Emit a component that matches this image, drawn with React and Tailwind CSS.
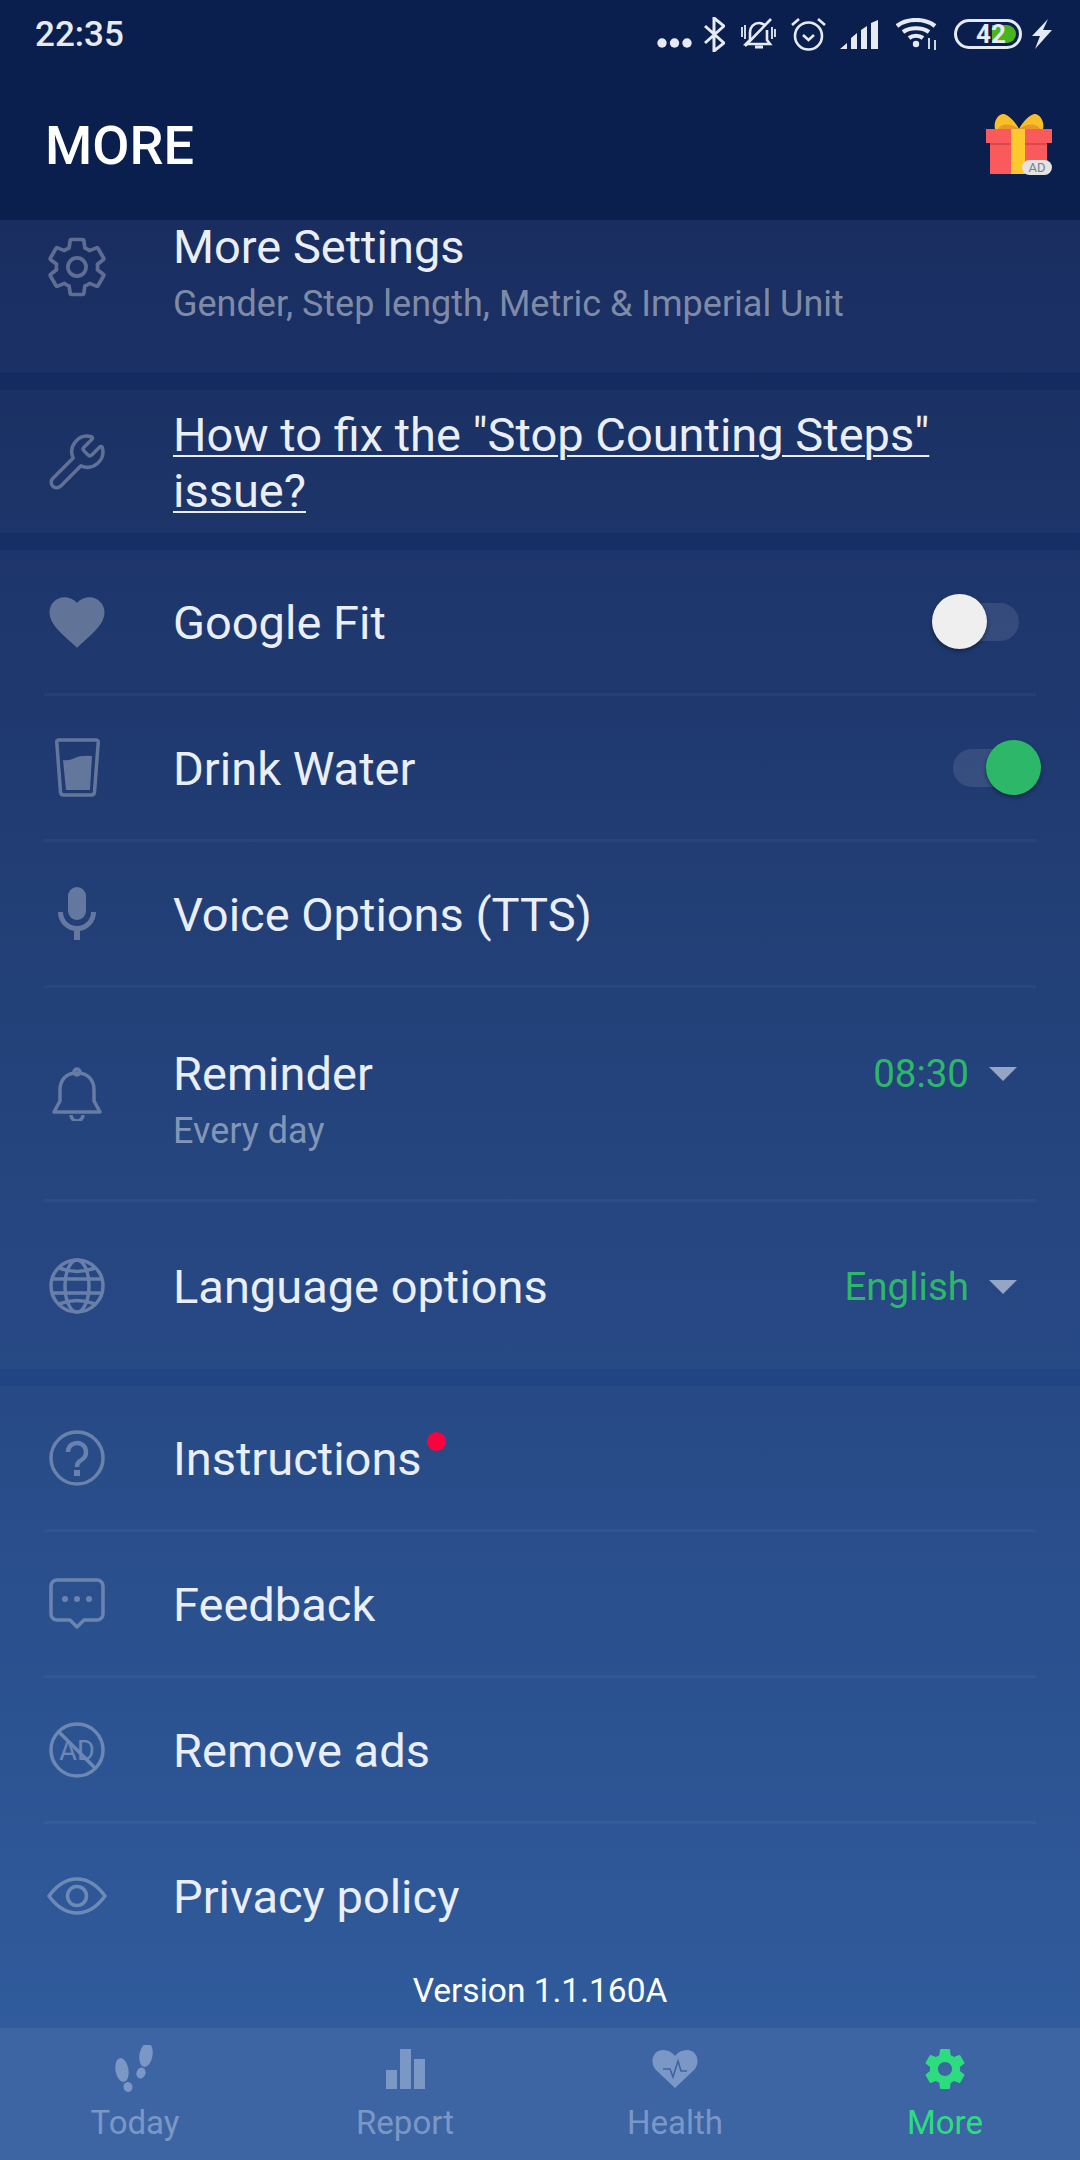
import React from 'react';
import { Wrench } from 'lucide-react';

const GEAR_OUTER = "M19.43 12.98c.04-.32.07-.64.07-.98s-.03-.66-.07-.98l2.11-1.65c.19-.15.24-.42.12-.64l-2-3.46c-.12-.22-.39-.3-.61-.22l-2.49 1c-.52-.4-1.08-.73-1.69-.98l-.38-2.65C14.46 2.18 14.25 2 14 2h-4c-.25 0-.46.18-.49.42l-.38 2.65c-.61.25-1.17.59-1.69.98l-2.49-1c-.23-.09-.49 0-.61.22l-2 3.46c-.13.22-.07.49.12.64l2.11 1.65c-.04.32-.07.65-.07.98s.03.66.07.98l-2.11 1.65c-.19.15-.24.42-.12.64l2 3.46c.12.22.39.3.61.22l2.49-1c.52.4 1.08.73 1.69.98l.38 2.65c.03.24.24.42.49.42h4c.25 0 .46-.18.49-.42l.38-2.65c.61-.25 1.17-.59 1.69-.98l2.49 1c.23.09.49 0 .61-.22l2-3.46c.12-.22.07-.49-.12-.64l-2.11-1.65z";
const GEAR_HOLE = "M12 15.5c-1.93 0-3.5-1.57-3.5-3.5s1.57-3.5 3.5-3.5 3.5 1.57 3.5 3.5-1.57 3.5-3.5 3.5z";
const HEART = "M12 21.35l-1.45-1.32C5.4 15.36 2 12.28 2 8.5 2 5.42 4.42 3 7.5 3c1.74 0 3.41.81 4.5 2.09C13.09 3.81 14.76 3 16.5 3 19.58 3 22 5.42 22 8.5c0 3.78-3.4 6.86-8.55 11.54L12 21.35z";

// list icons, all drawn solid white and faded through opacity
const iconClass = "text-white opacity-30";

const GearIcon = () => (
  <svg width="66" height="66" viewBox="0 0 24 24" fill="none" stroke="currentColor" strokeWidth="1.35" strokeLinejoin="round" className={iconClass}>
    <path d={GEAR_OUTER} />
    <circle cx="12" cy="12" r="3.3" />
  </svg>
);
const WrenchIcon = () => <Wrench size={62} strokeWidth={1.35} className={`${iconClass} -scale-x-100 rotate-90`} />;
const HeartIcon = () => (
  <svg width="66" height="66" viewBox="0 0 24 24" fill="currentColor" className={iconClass}><path d={HEART} /></svg>
);
const GlassIcon = () => (
  <svg width="45" height="59" viewBox="0 0 45 59" fill="none" className={iconClass}>
    <path d="M4 2H41Q43.5 2 43.2 4.5L39.5 54Q39.2 57 36.5 57H8.5Q5.8 57 5.5 54L1.8 4.5Q1.5 2 4 2Z" stroke="currentColor" strokeWidth="3.5" />
    <path d="M8 22Q14 23 20 20T37 18L35 52H11Z" fill="currentColor" />
  </svg>
);
const MicIcon = () => (
  <svg width="38" height="53" viewBox="0 0 38 53" fill="none" className={iconClass}>
    <rect x="10" y="0" width="18" height="33" rx="9" fill="currentColor" />
    <path d="M2.5 25a16.5 16.5 0 0 0 33 0" stroke="currentColor" strokeWidth="5" />
    <rect x="16" y="41" width="6" height="12" fill="currentColor" />
  </svg>
);
const BellIcon = () => (
  <svg width="50" height="54" viewBox="0 0 50 54" fill="none" stroke="currentColor" strokeWidth="3.5" strokeLinejoin="round" className={iconClass}>
    <path d="M25 6C14 6 8 13 8 23V34L2 45H48L42 34V23C42 13 36 6 25 6Z" />
    <circle cx="25" cy="5" r="3" />
    <path d="M19 48a6 6 0 0 0 12 0" />
  </svg>
);
const GlobeIcon = () => (
  <svg width="56" height="56" viewBox="0 0 56 56" fill="none" stroke="currentColor" strokeWidth="3.5" className={iconClass}>
    <circle cx="28" cy="28" r="26" />
    <ellipse cx="28" cy="28" rx="12" ry="26" />
    <path d="M3 21H53M3 35H53M10 10Q28 17 46 10M10 46Q28 39 46 46" />
  </svg>
);
const QuestionIcon = () => (
  <svg width="56" height="56" viewBox="0 0 56 56" fill="none" stroke="currentColor" className={iconClass}>
    <circle cx="28" cy="28" r="26" strokeWidth="3.5" />
    <path d="M19 22a9 9 0 1 1 14 7.5c-3.5 2.3-5 3.5-5 7.5" strokeWidth="4.5" />
    <rect x="25" y="40" width="6" height="6" fill="currentColor" stroke="none" />
  </svg>
);
const ChatIcon = () => (
  <svg width="56" height="52" viewBox="0 0 56 52" fill="none" className={iconClass}>
    <path d="M8 2H48A6 6 0 0 1 54 8V36A6 6 0 0 1 48 42H35L28 49L21 42H8A6 6 0 0 1 2 36V8A6 6 0 0 1 8 2Z" stroke="currentColor" strokeWidth="3.5" strokeLinejoin="round" />
    <circle cx="16" cy="21" r="3" fill="currentColor" />
    <circle cx="28" cy="21" r="3" fill="currentColor" />
    <circle cx="40" cy="21" r="3" fill="currentColor" />
  </svg>
);
const NoAdIcon = () => (
  <svg width="56" height="56" viewBox="0 0 56 56" fill="none" className={iconClass}>
    <circle cx="28" cy="28" r="26" stroke="currentColor" strokeWidth="3.5" />
    <text x="28" y="38" textAnchor="middle" fontFamily="Roboto" fontSize="27" fill="currentColor">AD</text>
    <path d="M10 10L46 46" stroke="currentColor" strokeWidth="3.5" />
  </svg>
);
const EyeIcon = () => (
  <svg width="60" height="38" viewBox="0 0 60 38" fill="none" stroke="currentColor" strokeWidth="3.5" strokeLinejoin="round" className={iconClass}>
    <path d="M2 19C10 8 19 2 30 2S50 8 58 19C50 30 41 36 30 36S10 30 2 19Z" />
    <circle cx="30" cy="19" r="9.5" />
  </svg>
);

const Toggle = ({ on }) => (
  <div className="relative w-[66px] h-[38px] rounded-full bg-white/10">
    <div className={`absolute top-[-9px] w-[55px] h-[55px] rounded-full shadow-[0_2px_4px_rgba(0,0,0,0.4)] ${on ? 'right-[-22px] bg-[#2cb868]' : 'left-[-21px] bg-[#efefef]'}`} />
  </div>
);

const Caret = () => (
  <div className="w-0 h-0 ml-[20px] border-x-[14px] border-x-transparent border-t-[14px] border-t-[#94a5c6]" />
);

const Row = ({ icon, title, sub, right, last, height = 'h-[146px]', dot }) => (
  <div className={`mx-[44px] flex items-center ${height} ${last ? '' : 'border-b-[3px] border-white/[0.04]'}`}>
    <div className="w-[66px] mr-[63px] flex items-center justify-center shrink-0">{icon}</div>
    <div className={`flex-1 ${sub ? 'mt-[18px]' : 'mt-[2px]'}`}>
      <div className="relative w-fit text-[47px] leading-[56px] text-[#e9eef8]">
        {title}
        {dot && <div className="absolute top-[1px] right-[-24px] w-[19px] h-[19px] rounded-full bg-[#f8033f]" />}
      </div>
      {sub && <div className="text-[36px] leading-[58px] text-white/45">{sub}</div>}
    </div>
    {right}
  </div>
);

const StatusBar = () => (
  <div className="h-[68px] pl-[35px] pr-[28px] flex items-center justify-between text-[#e6eaf3]">
    <span className="mt-[2px] text-[35px] font-medium">22:35</span>
    <div className="flex items-center">
      <svg width="35" height="10" viewBox="0 0 35 10" fill="currentColor" className="mt-[18px]">
        <circle cx="5" cy="5" r="4.7" /><circle cx="17.5" cy="5" r="4.7" /><circle cx="30" cy="5" r="4.7" />
      </svg>
      <svg width="21" height="35" viewBox="0 0 21 35" fill="none" stroke="currentColor" strokeWidth="3" className="ml-[12px]">
        <path d="M1 9L20 26L10 34V1L20 9L1 26" />
      </svg>
      <svg width="35" height="33" viewBox="0 0 35 33" fill="none" stroke="currentColor" strokeWidth="2.6" className="ml-[16px]">
        <path d="M9 22V14C9 9 13 5 18 5C20 5 22 6 24 7M26 12V22L29 26H5L9 22" />
        <path d="M30 1L4 28" />
        <path d="M1 9V19M4 7V21M31 9V21M34 11V19" strokeWidth="1.8" />
        <path d="M14 29H22" strokeWidth="3" />
      </svg>
      <svg width="35" height="34" viewBox="0 0 35 34" fill="none" stroke="currentColor" strokeWidth="2.6" className="ml-[15px]">
        <circle cx="17.5" cy="19" r="13.5" />
        <path d="M12 18L17.5 23L23 18" />
        <path d="M1 8L8 2M34 8L27 2" />
      </svg>
      <svg width="40" height="29" viewBox="0 0 40 29" fill="currentColor" className="ml-[14px]">
        <path d="M0 29L7 23V29ZM11 29V18L17 13V29ZM21 29V10L27 6V29ZM31 29V3L38 0V29Z" />
      </svg>
      <svg width="42" height="32" viewBox="0 0 42 32" fill="none" stroke="currentColor" strokeWidth="4.2" className="ml-[16px]">
        <path d="M1 8C11 0 29 0 39 8" />
        <path d="M7 14C14 9 26 9 33 14" />
        <path d="M13 20C17 17 23 17 27 20" />
        <circle cx="20" cy="26" r="3.2" fill="currentColor" stroke="none" />
        <path d="M33 20V31M39 22V32" strokeWidth="1.8" />
      </svg>
      <div className="relative ml-[16px] w-[68px] h-[30px] rounded-full border-[3px] border-current">
        <div className="absolute left-[35px] top-[3px] w-[24px] h-[18px] rounded-r-full bg-[#4ab41f]" />
        <span className="absolute left-[19px] top-[-3px] text-[26px] leading-[30px] font-bold">42</span>
      </div>
      <svg width="20" height="30" viewBox="0 0 20 30" fill="currentColor" className="ml-[10px]">
        <path d="M16 0L0 17H8L3 30L20 11H11Z" />
      </svg>
    </div>
  </div>
);

const GiftIcon = () => (
  <svg width="66" height="62" viewBox="0 0 66 62">
    <path d="M33 16C24 16 14 16 9 16C7 8 13 0 18 1C24 3 30 10 33 16ZM33 16C42 16 52 16 57 16C59 8 53 0 48 1C42 3 36 10 33 16Z" fill="#f9bf2a" />
    <path d="M33 16H12C14 11 24 9 33 16ZM33 16H54C52 11 42 9 33 16Z" fill="#e8972a" />
    <rect x="4" y="30" width="57" height="31" fill="#fb5a5c" />
    <rect x="0" y="16" width="66" height="14" fill="#fb5a5c" />
    <rect x="4" y="30" width="57" height="2" fill="#d94a4e" />
    <rect x="25" y="16" width="14" height="45" fill="#fdc92c" />
    <rect x="36" y="47" width="30" height="15" rx="7.5" fill="#e3e3e3" />
    <text x="51" y="59" textAnchor="middle" fontFamily="Roboto" fontSize="13" fill="#77808f">AD</text>
  </svg>
);

const NavItem = ({ icon, label, active }) => (
  <div className="flex-1 flex flex-col items-center pt-[17px]">
    <div className="h-[48px] flex items-center justify-center">{icon}</div>
    <span className={`mt-[10px] text-[33px] leading-[40px] ${active ? 'text-[#2cdc7f]' : 'text-[#7b97c6]'}`}>{label}</span>
  </div>
);

export default function App() {
  return (
    <div className="w-[1080px] h-[2160px] flex flex-col overflow-hidden font-[Roboto,sans-serif]">
      {/* Header */}
      <div className="bg-[#0b1f4f]">
        <StatusBar />
        <div className="h-[152px] pl-[45px] pr-[28px] flex items-center justify-between">
          <h1 className="pt-[2px] text-[54px] font-medium text-white">MORE</h1>
          <GiftIcon />
        </div>
      </div>

      {/* Scrolled settings list */}
      <div className="flex-1 overflow-hidden bg-gradient-to-b from-[#12275b] to-[#2a5699] flex flex-col gap-[17px]">
        <div className="h-[153px] overflow-hidden bg-white/[0.03]">
          <div className="-mt-[60px]">
            <Row last height="h-[214px]" icon={<GearIcon />} title="More Settings" sub="Gender, Step length, Metric & Imperial Unit" />
          </div>
        </div>

        <div className="bg-white/[0.03]">
          <Row last height="h-[143px]" icon={<WrenchIcon />} title={<span className="underline underline-offset-[4px] decoration-[2px]">How to fix the "Stop Counting Steps" issue?</span>} />
        </div>

        <div className="bg-white/[0.03]">
          <Row icon={<HeartIcon />} title="Google Fit" right={<div className="mr-[17px]"><Toggle /></div>} />
          <Row icon={<GlassIcon />} title="Drink Water" right={<div className="mr-[17px]"><Toggle on /></div>} />
          <Row icon={<MicIcon />} title="Voice Options (TTS)" />
          <Row
            height="h-[214px]"
            icon={<BellIcon />}
            title="Reminder"
            sub="Every day"
            right={
              <div className="flex items-center mb-[40px] mr-[19px]">
                <span className="text-[38.5px] text-[#2cb868]">08:30</span>
                <Caret />
              </div>
            }
          />
          <Row
            last
            height="h-[167px]"
            icon={<GlobeIcon />}
            title="Language options"
            right={
              <div className="flex items-center mt-[3px] mr-[19px]">
                <span className="text-[38.5px] text-[#2cb868]">English</span>
                <Caret />
              </div>
            }
          />
        </div>

        <div className="flex-1 bg-white/[0.03]">
          <Row dot icon={<QuestionIcon />} title="Instructions" />
          <Row icon={<ChatIcon />} title="Feedback" />
          <Row icon={<NoAdIcon />} title="Remove ads" />
          <Row last height="h-[143px]" icon={<EyeIcon />} title="Privacy policy" />
          <div className="mt-[4px] text-center text-[33.5px] leading-[40px] text-white">Version 1.1.160A</div>
        </div>
      </div>

      {/* Bottom navigation */}
      <div className="h-[132px] flex bg-[#3d65a4]">
        <NavItem
          label="Today"
          icon={
            <svg width="44" height="48" viewBox="0 0 44 48" fill="#7b97c6">
              <ellipse cx="9" cy="25" rx="6.5" ry="12" transform="rotate(-10 9 25)" />
              <ellipse cx="15" cy="42" rx="4.5" ry="5" transform="rotate(-15 15 42)" />
              <ellipse cx="33" cy="10" rx="6.5" ry="12" transform="rotate(10 33 10)" />
              <ellipse cx="28" cy="28" rx="4.5" ry="5.5" transform="rotate(20 28 28)" />
            </svg>
          }
        />
        <NavItem
          label="Report"
          icon={
            <svg width="39" height="40" viewBox="0 0 39 40" fill="#7b97c6">
              <rect x="0" y="21" width="11" height="19" />
              <rect x="14" y="0" width="11" height="40" />
              <rect x="28" y="10" width="11" height="30" />
            </svg>
          }
        />
        <NavItem
          label="Health"
          icon={
            <svg width="48" height="38" viewBox="0 0 48 38">
              <path d="M24 38L5 20C-2 12 2 0 12 0C17 0 21 2 24 6C27 2 31 0 36 0C46 0 50 12 43 20Z" fill="#7b97c6" />
              <path d="M12 19H19L22 27L27 11L30 21H36" fill="none" stroke="#3d65a4" strokeWidth="1.6" />
            </svg>
          }
        />
        <NavItem
          active
          label="More"
          icon={
            <svg width="48" height="48" viewBox="0 0 24 24" fill="#2cdc7f">
              <path d={GEAR_OUTER + GEAR_HOLE} />
            </svg>
          }
        />
      </div>
    </div>
  );
}
